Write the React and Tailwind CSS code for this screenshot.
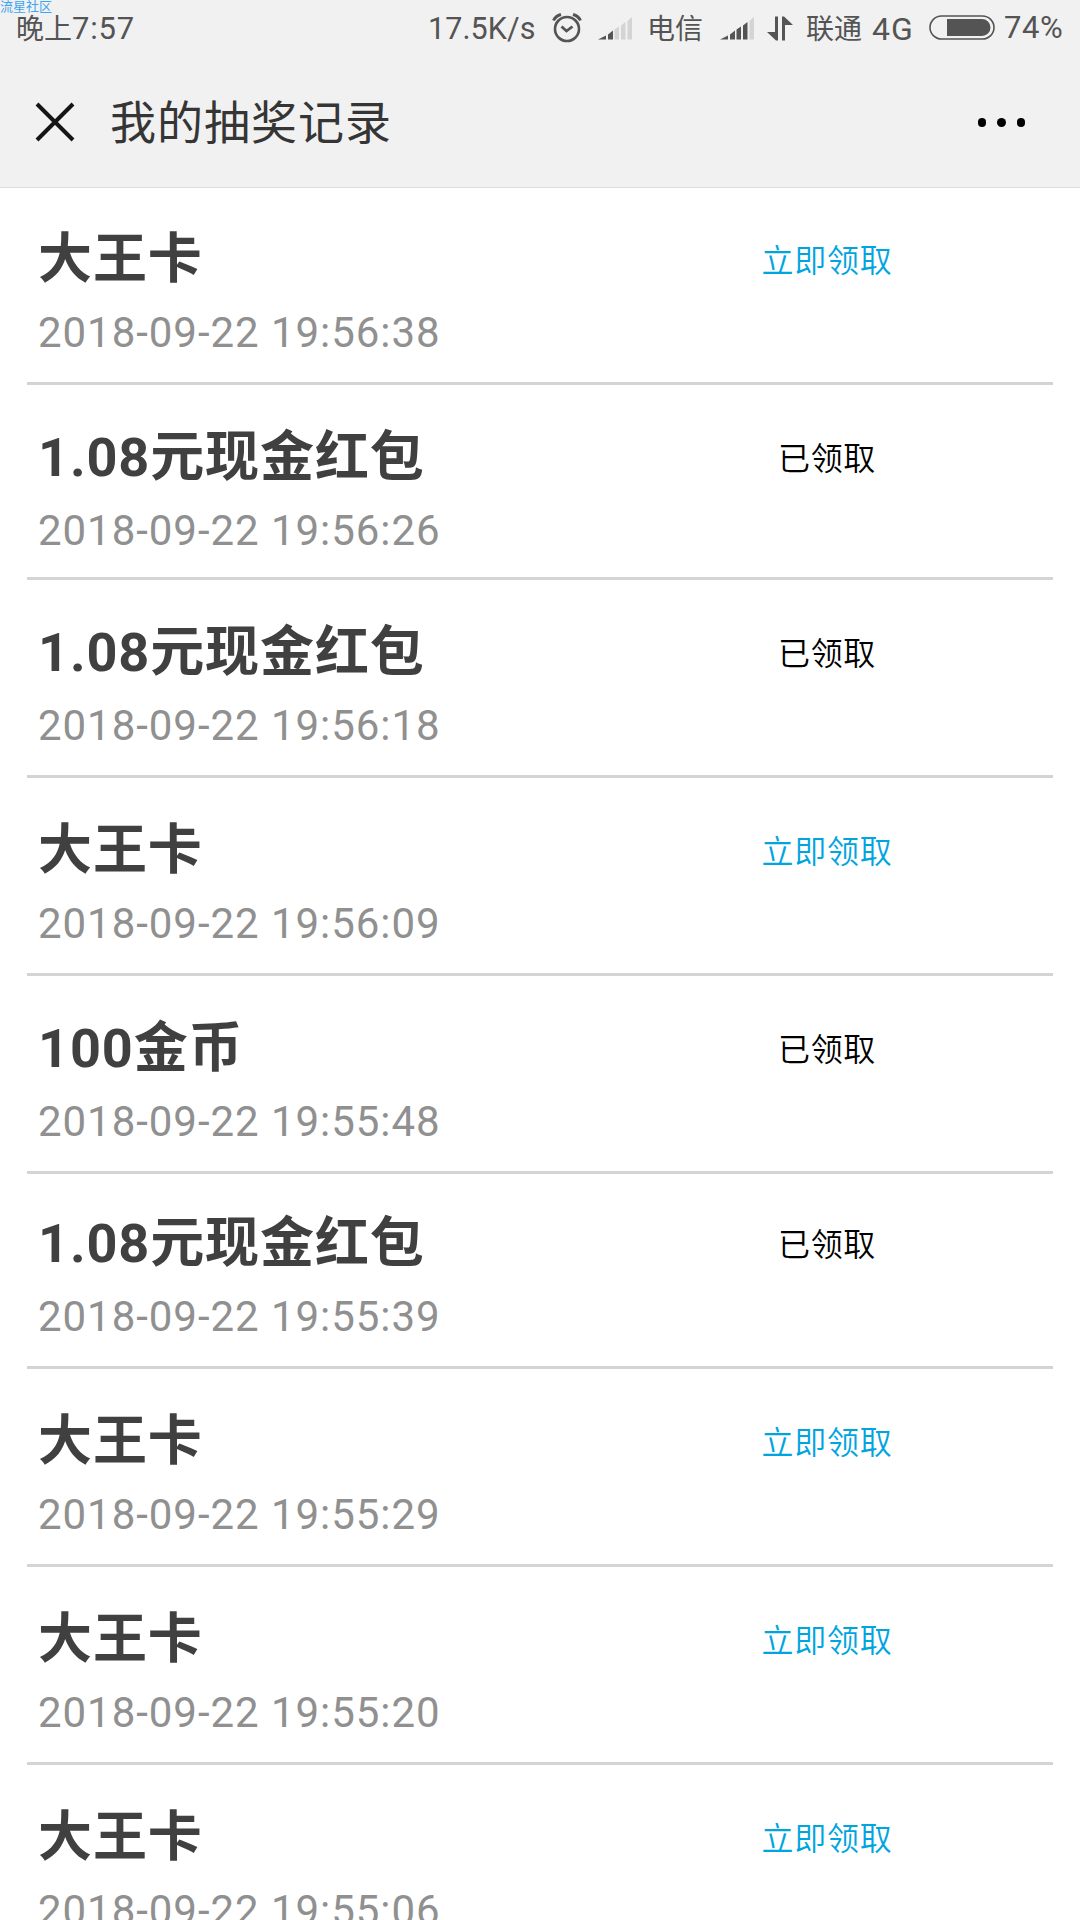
const records = [
  { id: 1, title: "大王卡", time: "2018-09-22 19:56:38", claimed: false, row: "h-[197px] pt-[39px]" },
  { id: 2, title: "1.08元现金红包", time: "2018-09-22 19:56:26", claimed: true, row: "h-[195px] pt-10" },
  { id: 3, title: "1.08元现金红包", time: "2018-09-22 19:56:18", claimed: true, row: "h-[198px] pt-10" },
  { id: 4, title: "大王卡", time: "2018-09-22 19:56:09", claimed: false, row: "h-[198px] pt-10" },
  { id: 5, title: "100金币", time: "2018-09-22 19:55:48", claimed: true, row: "h-[198px] pt-10" },
  { id: 6, title: "1.08元现金红包", time: "2018-09-22 19:55:39", claimed: true, row: "h-[195px] pt-[37px]" },
  { id: 7, title: "大王卡", time: "2018-09-22 19:55:29", claimed: false, row: "h-[198px] pt-10" },
  { id: 8, title: "大王卡", time: "2018-09-22 19:55:20", claimed: false, row: "h-[198px] pt-10" },
  { id: 9, title: "大王卡", time: "2018-09-22 19:55:06", claimed: false, row: "h-[198px] pt-10" },
];

const Signal = ({ level }) => {
  const bars = [
    "M0 23.5L8 19.5V23.5Z",
    "M10 18.5L15 14.5V23.5H10Z",
    "M16.5 13.5L21 10.5V23.5H16.5Z",
    "M23 9.5L27.5 6V23.5H23Z",
    "M29.5 5L34 1V23.5H29.5Z",
  ];
  return (
    <svg viewBox="0 0 34 24" className="h-6 w-[34px] shrink-0">
      {bars.map((d, i) => (
        <path key={d} d={d} fill={i < level ? "#545454" : "#d4d4d4"} />
      ))}
    </svg>
  );
};

const StatusBar = () => (
  <div className="relative flex h-14 items-center pl-4 text-[28px] text-[#545454]">
    <span className="absolute left-0 top-0 text-[13px] leading-[13px] text-[#3fa4f2]">流星社区</span>
    <span className="flex w-[412px] shrink-0 items-baseline whitespace-nowrap pt-[3px]">
      晚上<span className="text-[31px] tracking-[0.8px]">7:57</span>
    </span>
    <span className="w-[124px] shrink-0 whitespace-nowrap pt-px text-[30.5px] tracking-[0.1px]">17.5K/s</span>
    <svg viewBox="0 0 30 30" className="mr-4 h-[30px] w-[30px] shrink-0" fill="none" stroke="#545454">
      <circle cx="15" cy="16" r="12" strokeWidth="2.6" />
      <path d="M9.5 13.5L14.5 18L20.5 13.5" strokeWidth="2.8" />
      <path d="M1.5 7.5Q3.5 3 9 1.5M28.5 7.5Q26.5 3 21 1.5" strokeWidth="3" />
    </svg>
    <Signal level={2} />
    <span className="ml-[15px] w-[73px] shrink-0 whitespace-nowrap pt-[3px]">电信</span>
    <Signal level={4} />
    <svg viewBox="0 0 26 25" className="ml-[13px] h-[25px] w-[26px] shrink-0" fill="#545454">
      <path d="M8 0.5H11V24.5H9L0 16H8Z" />
      <path d="M15 0.5H17L26 9H18V24.5H15Z" />
    </svg>
    <span className="ml-[13px] w-[66px] shrink-0 whitespace-nowrap pt-[3px]">联通</span>
    <span className="w-[57px] shrink-0 whitespace-nowrap pt-px text-[32px] tracking-[1px]">4G</span>
    <svg viewBox="0 0 66 26" className="h-[26px] w-[66px] shrink-0">
      <rect x="1" y="1" width="64" height="23" rx="11.5" fill="none" stroke="#545454" strokeWidth="1.6" />
      <path d="M18 4H53A8.5 8.5 0 0 1 53 21H18Z" fill="#545454" />
    </svg>
    <span className="ml-[9px] whitespace-nowrap pt-px text-[31px] tracking-[0.6px]">74%</span>
  </div>
);

const TitleBar = () => (
  <header className="flex h-[132px] items-center border-b border-[#dedede] pt-px">
    <button className="ml-[25px]" aria-label="关闭">
      <svg viewBox="0 0 60 60" className="h-[60px] w-[60px]" stroke="#151515" strokeWidth="4" fill="none">
        <path d="M12 12L48 48M48 12L12 48" />
      </svg>
    </button>
    <h1 className="ml-[25px] pt-px text-[46px] leading-none tracking-[1px] text-[#353535]">我的抽奖记录</h1>
    <button className="ml-auto mr-[55px] flex gap-[11px] pt-px" aria-label="更多">
      <span className="size-[8.5px] rounded-full bg-black"></span>
      <span className="size-[8.5px] rounded-full bg-black"></span>
      <span className="size-[8.5px] rounded-full bg-black"></span>
    </button>
  </header>
);

const App = () => {
  return (
    <div className="h-[1920px] w-[1080px] overflow-hidden bg-white font-[Roboto,'Noto_Sans_CJK_SC',sans-serif]">
      <div className="bg-[#f1f1f1]">
        <StatusBar />
        <TitleBar />
      </div>

      {/* Prize records */}
      <ul className="mx-[27px]">
        {records.map((record) => (
          <li key={record.id} className={`flex border-b-3 border-[#d4d4d4] ${record.row}`}>
            <div className="w-[600px] pl-[11px]">
              <h2 className="h-[66px] whitespace-nowrap text-[54px] font-bold leading-[66px] tracking-[0.9px] text-[#404040]">
                {record.title}
              </h2>
              <p className="mt-[13px] h-[54px] whitespace-nowrap text-[42px] leading-[54px] tracking-[0.95px] text-[#909090]">
                {record.time}
              </p>
            </div>
            <div className="w-[400px] pt-3 text-center text-[32px] font-[350] leading-[44px] tracking-[0.7px]">
              {record.claimed ? (
                <span className="text-black">已领取</span>
              ) : (
                <button className="text-[#00a5e0]">立即领取</button>
              )}
            </div>
          </li>
        ))}
      </ul>
    </div>
  );
};

export default App;
